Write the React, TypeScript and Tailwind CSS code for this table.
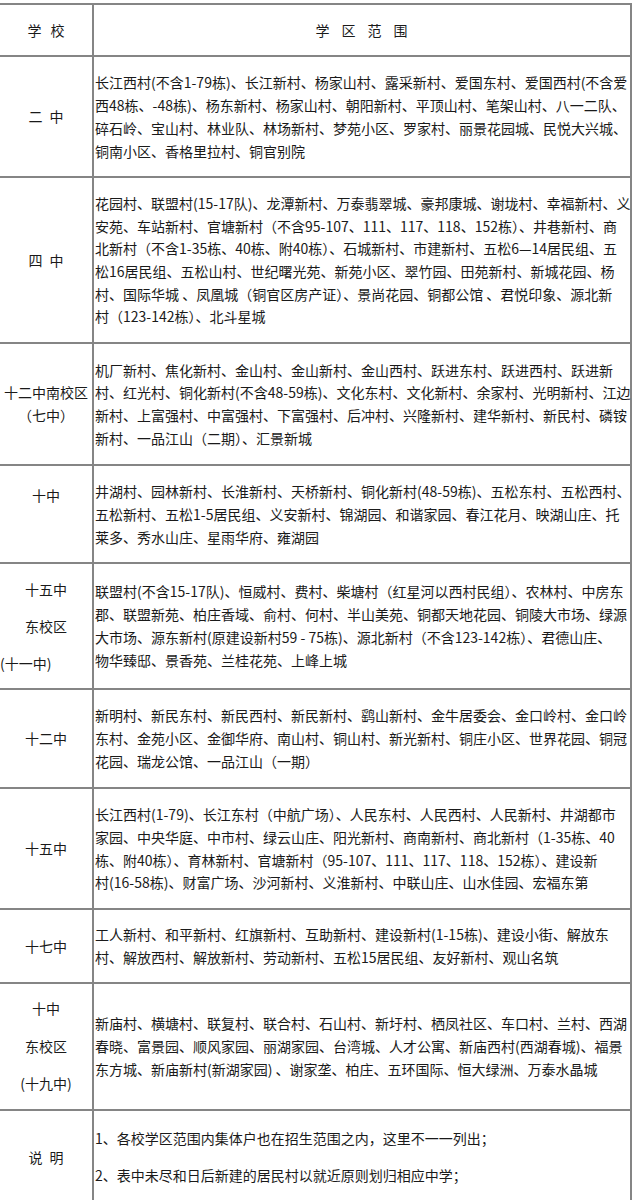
import React from "react";

type RowProps = {
  h: string;
  left: React.ReactNode;
  children: React.ReactNode;
  top?: boolean;
};

function Row({ h, left, children, top = true }: RowProps) {
  return (
    <div className={`flex ${h} ${top ? "border-t-2 border-[#858585]" : ""}`}>
      <div className="w-[92px] shrink-0 flex flex-col justify-center items-center">{left}</div>
      <div className="flex-1 min-w-0 border-l-2 border-[#858585] flex flex-col justify-center pl-[1px]">
        {children}
      </div>
    </div>
  );
}

function Lines({ lines, lh = "leading-[23px]" }: { lines: string[]; lh?: string }) {
  return (
    <>
      {lines.map((l, i) => (
        <div key={i} className={`${lh} whitespace-nowrap`}>
          {l}
        </div>
      ))}
    </>
  );
}

function Spaced({ a, b, gap = "gap-[7px]" }: { a: string; b: string; gap?: string }) {
  return (
    <div className={`flex ${gap} leading-[23px]`}>
      <span>{a}</span>
      <span>{b}</span>
    </div>
  );
}

export default function App() {
  return (
    <div className="bg-white min-h-[1200px] overflow-hidden">
      <div className="-ml-[2px] mt-[3px] w-[634px] border-2 border-[#858585] text-[#1a1a1a] text-[14px] font-['Noto_Sans_CJK_SC','Noto_Sans',sans-serif]">
        <Row
          h="h-[50px]"
          top={false}
          left={<Spaced a="学" b="校" gap="gap-[9px]" />}
        >
          <div className="flex justify-center gap-[12px] leading-[23px] pr-[2px]">
            <span>学</span>
            <span>区</span>
            <span>范</span>
            <span>围</span>
          </div>
        </Row>

        <Row h="h-[121px]" left={<Spaced a="二" b="中" />}>
          <Lines
            lines={[
              "长江西村(不含1-79栋)、长江新村、杨家山村、露采新村、爱国东村、爱国西村(不含爱",
              "西48栋、-48栋)、杨东新村、杨家山村、朝阳新村、平顶山村、笔架山村、八一二队、",
              "碎石岭、宝山村、林业队、林场新村、梦苑小区、罗家村、丽景花园城、民悦大兴城、",
              "铜南小区、香格里拉村、铜官别院",
            ]}
          />
        </Row>

        <Row h="h-[166px]" left={<Spaced a="四" b="中" />}>
          <Lines
            lh="leading-[22.6px]"
            lines={[
              "花园村、联盟村(15-17队)、龙潭新村、万泰翡翠城、豪邦康城、谢垅村、幸福新村、义",
              "安苑、车站新村、官塘新村（不含95-107、111、117、118、152栋）、井巷新村、商",
              "北新村（不含1-35栋、40栋、附40栋）、石城新村、市建新村、五松6—14居民组、五",
              "松16居民组、五松山村、世纪曙光苑、新苑小区、翠竹园、田苑新村、新城花园、杨",
              "村、国际华城 、凤凰城（铜官区房产证）、景尚花园、铜都公馆 、君悦印象、源北新",
              "村（123-142栋）、北斗星城",
            ]}
          />
        </Row>

        <Row
          h="h-[122px]"
          left={
            <>
              <div className="leading-[23px] whitespace-nowrap">十二中南校区</div>
              <div className="leading-[23px] whitespace-nowrap">（七中）</div>
            </>
          }
        >
          <Lines
            lh="leading-[22.6px]"
            lines={[
              "机厂新村、焦化新村、金山村、金山新村、金山西村、跃进东村、跃进西村、跃进新",
              "村、红光村、铜化新村(不含48-59栋)、文化东村、文化新村、余家村、光明新村、江边",
              "新村、上富强村、中富强村、下富强村、后冲村、兴隆新村、建华新村、新民村、磷铵",
              "新村、一品江山（二期）、汇景新城",
            ]}
          />
        </Row>

        <Row
          h="h-[98px]"
          left={
            <>
              <div className="h-[37px] leading-[37px]">十中</div>
              <div className="h-[37px]"></div>
            </>
          }
        >
          <Lines
            lines={[
              "井湖村、园林新村、长淮新村、天桥新村、铜化新村(48-59栋)、五松东村、五松西村、",
              "五松新村、五松1-5居民组、义安新村、锦湖园、和谐家园、春江花月、映湖山庄、托",
              "莱多、秀水山庄、星雨华府、雍湖园",
            ]}
          />
        </Row>

        <Row
          h="h-[126px]"
          left={
            <>
              <div className="h-[37px] leading-[37px]">十五中</div>
              <div className="h-[37px] leading-[37px]">东校区</div>
              <div className="h-[37px] leading-[37px] self-stretch text-left">(十一中)</div>
            </>
          }
        >
          <Lines
            lines={[
              "联盟村(不含15-17队)、恒威村、费村、柴塘村（红星河以西村民组）、农林村、中房东",
              "郡、联盟新苑、柏庄香域、俞村、何村、半山美苑、铜都天地花园、铜陵大市场、绿源",
              "大市场、源东新村(原建设新村59 - 75栋)、源北新村（不含123-142栋）、君德山庄、",
              "物华臻邸、景香苑、兰桂花苑、上峰上城",
            ]}
          />
        </Row>

        <Row h="h-[99px]" left={<div className="leading-[23px]">十二中</div>}>
          <Lines
            lines={[
              "新明村、新民东村、新民西村、新民新村、鹞山新村、金牛居委会、金口岭村、金口岭",
              "东村、金苑小区、金御华府、南山村、铜山村、新光新村、铜庄小区、世界花园、铜冠",
              "花园、瑞龙公馆、一品江山（一期）",
            ]}
          />
        </Row>

        <Row h="h-[121px]" left={<div className="leading-[23px]">十五中</div>}>
          <Lines
            lh="leading-[22.7px]"
            lines={[
              "长江西村(1-79)、长江东村（中航广场）、人民东村、人民西村、人民新村、井湖都市",
              "家园、中央华庭、中市村、绿云山庄、阳光新村、商南新村、商北新村（1-35栋、40",
              "栋、附40栋）、育林新村、官塘新村（95-107、111、117、118、152栋）、建设新",
              "村(16-58栋)、财富广场、沙河新村、义淮新村、中联山庄、山水佳园、宏福东第",
            ]}
          />
        </Row>

        <Row h="h-[74px]" left={<div className="leading-[23px]">十七中</div>}>
          <Lines
            lines={[
              "工人新村、和平新村、红旗新村、互助新村、建设新村(1-15栋)、建设小街、解放东",
              "村、解放西村、解放新村、劳动新村、五松15居民组、友好新村、观山名筑",
            ]}
          />
        </Row>

        <Row
          h="h-[127px]"
          left={
            <>
              <div className="h-[37.5px] leading-[37.5px]">十中</div>
              <div className="h-[37.5px] leading-[37.5px]">东校区</div>
              <div className="h-[37.5px] leading-[37.5px]">(十九中)</div>
            </>
          }
        >
          <Lines
            lines={[
              "新庙村、横塘村、联复村、联合村、石山村、新圩村、栖凤社区、车口村、兰村、西湖",
              "春晓、富景园、顺风家园、丽湖家园、台湾城、人才公寓、新庙西村(西湖春城)、福景",
              "东方城、新庙新村(新湖家园) 、谢家垄、柏庄、五环国际、恒大绿洲、万泰水晶城",
            ]}
          />
        </Row>

        <Row h="h-[94px]" left={<Spaced a="说" b="明" />}>
          <div className="h-[37px] leading-[37px] whitespace-nowrap">
            1、各校学区范围内集体户也在招生范围之内，这里不一一列出；
          </div>
          <div className="h-[37px] leading-[37px] whitespace-nowrap">
            2、表中未尽和日后新建的居民村以就近原则划归相应中学；
          </div>
        </Row>
      </div>
    </div>
  );
}
